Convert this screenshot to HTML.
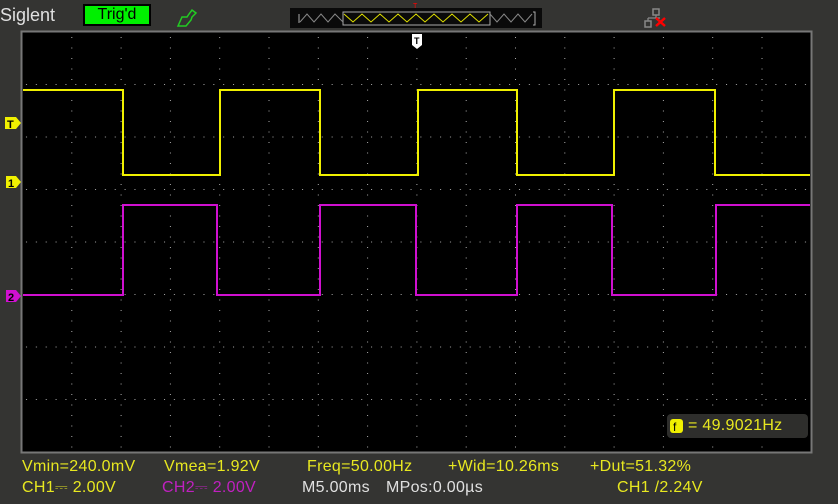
<!DOCTYPE html>
<html><head><meta charset="utf-8"><style>
body{margin:0;width:838px;height:504px;background:#343432;overflow:hidden;position:relative;font-family:"Liberation Sans",sans-serif}
.t{position:absolute;font-size:16px;white-space:nowrap;line-height:1;letter-spacing:0.3px}
.y{color:#e8e820}.m{color:#c020c0}.w{color:#e0e0e0}
</style></head><body>
<svg width="838" height="504" style="position:absolute;left:0;top:0">
<defs>
<pattern id="hd" x="22" y="0" width="9.86" height="52.5" patternUnits="userSpaceOnUse"><rect x="4" y="31.5" width="1" height="1" fill="#aaa"/></pattern>
<pattern id="vd" x="22" y="32" width="49.3" height="10.5" patternUnits="userSpaceOnUse"><rect x="0" y="5" width="1" height="1" fill="#aaa"/></pattern>
</defs>
<rect x="22" y="32" width="789" height="420" fill="#000"/>
<rect x="23" y="33" width="787" height="418" fill="url(#hd)"/>
<rect x="23" y="33" width="787" height="418" fill="url(#vd)"/>
<rect x="21.5" y="31.5" width="790" height="421" fill="none" stroke="#777" stroke-width="2"/>
<rect x="290" y="8" width="252" height="20" fill="#0a0a0a"/>
<rect x="343" y="12" width="147" height="13" fill="none" stroke="#aaa" stroke-width="1"/>
<polyline points="299,14 299,23" fill="none" stroke="#aaa"/>
<polyline points="300,22 307,14 314,22 321,14 328,22 335,14 343,22" fill="none" stroke="#888"/>
<polyline points="344,14 353,22 362,14 371,22 380,14 389,22 398,14 407,22 416,14 425,22 434,14 443,22 452,14 461,22 470,14 479,22 488,14" fill="none" stroke="#e0e000"/>
<polyline points="490,14 497,22 504,14 511,22 518,14 525,22 532,14" fill="none" stroke="#888"/>
<polyline points="533,12 535,12 535,25 533,25" fill="none" stroke="#aaa"/>
<text x="413" y="8" font-size="7" fill="#f00" font-family="Liberation Sans">T</text>
<path d="M412 34 h10 v11 l-5 4 l-5 -4 z" fill="#fff"/>
<text x="414" y="44" font-size="9" font-weight="bold" fill="#000" font-family="Liberation Sans">T</text>
<rect x="653" y="9" width="6" height="6" fill="none" stroke="#888" stroke-width="1.5"/>
<rect x="645" y="21" width="6" height="6" fill="none" stroke="#888" stroke-width="1.5"/>
<path d="M656 15v3 M648 18h12 M648 18v3" stroke="#888" stroke-width="1.3" fill="none"/>
<path d="M656 18l9 8 M665 18l-9 8" stroke="#f00" stroke-width="2.5"/>
<path d="M178 26 l4 -9 l5 0 l2 -3 l3 -4 l4 3 l-4 4 l-1 3 l-5 6 z" fill="none" stroke="#2c2" stroke-width="1.5"/>
<polyline points="23,90 123,90 123,175 220,175 220,90 320,90 320,175 418,175 418,90 517,90 517,175 614,175 614,90 715,90 715,175 810,175" fill="none" stroke="#f0f000" stroke-width="2"/>
<polyline points="23,295 123,295 123,205 217,205 217,295 320,295 320,205 416,205 416,295 517,295 517,205 612,205 612,295 716,295 716,205 810,205" fill="none" stroke="#d010d0" stroke-width="2"/>
<path d="M5 117 h11 l5 6 l-5 6 h-11 z" fill="#f0f000"/>
<text x="7" y="128" font-size="11" font-weight="bold" fill="#000" font-family="Liberation Sans">T</text>
<path d="M6 176 h10 l5 6 l-5 6 h-10 z" fill="#f0f000"/>
<text x="8" y="187" font-size="11" font-weight="bold" fill="#000" font-family="Liberation Sans">1</text>
<path d="M6 290 h10 l5 6 l-5 6 h-10 z" fill="#d010d0"/>
<text x="8" y="301" font-size="11" font-weight="bold" fill="#000" font-family="Liberation Sans">2</text>
<rect x="667" y="414" width="141" height="24" rx="4" fill="#2e2e2c"/>
<rect x="670" y="419" width="13" height="14" rx="3" fill="#f0f000"/>
<text x="673" y="431" font-size="12" fill="#000" font-family="Liberation Sans">f</text>
</svg>
<div class="t w" style="left:0;top:6px;font-size:18px;letter-spacing:0">Siglent</div>
<div style="position:absolute;left:83px;top:4px;width:68px;height:22px;background:#000"></div>
<div style="position:absolute;left:85px;top:6px;width:64px;height:18px;background:#00f000;color:#000;font-size:16px;text-align:center;line-height:18px">Trig'd</div>
<div class="t y" style="left:688px;top:418px">= 49.9021Hz</div>
<div class="t y" style="left:22px;top:459px">Vmin=240.0mV</div>
<div class="t y" style="left:164px;top:459px">Vmea=1.92V</div>
<div class="t y" style="left:307px;top:459px">Freq=50.00Hz</div>
<div class="t y" style="left:448px;top:459px">+Wid=10.26ms</div>
<div class="t y" style="left:590px;top:459px">+Dut=51.32%</div>
<div class="t y" style="left:22px;top:480px">CH1⎓ 2.00V</div>
<div class="t m" style="left:162px;top:480px">CH2⎓ 2.00V</div>
<div class="t w" style="left:302px;top:480px">M5.00ms</div>
<div class="t w" style="left:386px;top:480px">MPos:0.00µs</div>
<div class="t y" style="left:617px;top:480px">CH1 /2.24V</div>
</body></html>
